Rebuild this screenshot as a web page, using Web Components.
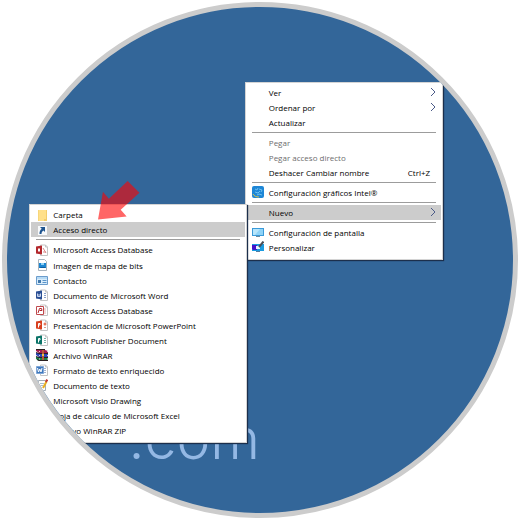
<!DOCTYPE html>
<html lang="es">
<head>
<meta charset="utf-8">
<title>Escritorio</title>
<style>
  body { margin: 0; background: #fff; font-family: "Open Sans", "Noto Sans", sans-serif; }
</style>
</head>
<body>
<desk-view>
  <span slot="wallpaper">.com</span>

  <context-menu slot="main" label="Escritorio">
    <menu-entry arrow>Ver</menu-entry>
    <menu-entry arrow>Ordenar por</menu-entry>
    <menu-entry>Actualizar</menu-entry>
    <menu-rule></menu-rule>
    <menu-entry disabled>Pegar</menu-entry>
    <menu-entry disabled>Pegar acceso directo</menu-entry>
    <menu-entry keys="Ctrl+Z">Deshacer Cambiar nombre</menu-entry>
    <menu-rule></menu-rule>
    <menu-entry icon="intel">Configuración gráficos Intel®</menu-entry>
    <menu-rule></menu-rule>
    <menu-entry active arrow>Nuevo</menu-entry>
    <menu-rule></menu-rule>
    <menu-entry icon="display">Configuración de pantalla</menu-entry>
    <menu-entry icon="personalize">Personalizar</menu-entry>
  </context-menu>

  <context-menu slot="sub" label="Nuevo">
    <menu-entry icon="folder">Carpeta</menu-entry>
    <menu-entry active icon="shortcut">Acceso directo</menu-entry>
    <menu-rule></menu-rule>
    <menu-entry icon="access">Microsoft Access Database</menu-entry>
    <menu-entry icon="bitmap">Imagen de mapa de bits</menu-entry>
    <menu-entry icon="contact">Contacto</menu-entry>
    <menu-entry icon="word">Documento de Microsoft Word</menu-entry>
    <menu-entry icon="access2">Microsoft Access Database</menu-entry>
    <menu-entry icon="powerpoint">Presentación de Microsoft PowerPoint</menu-entry>
    <menu-entry icon="publisher">Microsoft Publisher Document</menu-entry>
    <menu-entry icon="winrar">Archivo WinRAR</menu-entry>
    <menu-entry icon="rtf">Formato de texto enriquecido</menu-entry>
    <menu-entry icon="text">Documento de texto</menu-entry>
    <menu-entry>Microsoft Visio Drawing</menu-entry>
    <menu-entry>Hoja de cálculo de Microsoft Excel</menu-entry>
    <menu-entry icon="winrar">Archivo WinRAR ZIP</menu-entry>
  </context-menu>

  <pointer-arrow slot="pointer"></pointer-arrow>
</desk-view>

<script>
const page = (lines) => `<path d="M4.500 1h5l2 2v8.500h-7z" fill="#fff" stroke="#c4c4c4"/><path d="M9.500 1v2h2" fill="none" stroke="#c4c4c4"/>${lines}`;
const badge = (color, glyph) => `<path d="M0 2.500l6-1v9l-6-1z" fill="${color}"/>${glyph}`;

const ICONS = {
  folder: `<path d="M2 1h8v11H2z" fill="#ffe08a"/><path d="M10 1h1v11H8v-2h2z" fill="#f3cd6a"/><path d="M2 1h1v11H2z" fill="#f7d67a"/>`,
  shortcut: `<path d="M2 2h9v9H2z" fill="#f7f9fb"/><path d="M4 3h5v5L7.500 6.500C6 7.500 5.500 8.500 5.500 10H3.500C3.300 8 4.200 6 5.700 4.800z" fill="#1f5590"/>`,
  access: page(`<path d="M7 4l3 5M7 8h3" stroke="#d98a8a" fill="none"/>`) + badge("#b3282d", `<path d="M2 4.500h2v3H2z" fill="#fff"/>`),
  access2: page(`<path d="M8 5h2M8 7h2M8 9h2" stroke="#e2b0b0" fill="none"/>`) + `<path d="M.5 2.500h7v8h-7z" fill="#fff" stroke="#c04a4e"/><path d="M2 9l1.500-4.500H5.500L6 6.500H3.500" stroke="#b3282d" fill="none"/>`,
  bitmap: `<path d="M2.500 .5h6l2 2v9h-8z" fill="#fff" stroke="#a9b4bd"/><path d="M3 4h7v5H3z" fill="#1c86d1"/><path d="M3 9l2-1h4l1 1z" fill="#0c5da0"/><path d="M5 4h3v2H5z" fill="#8ed0f5"/>`,
  contact: `<path d="M.5 2.500h11v8H.5z" fill="#d9edfb" stroke="#6b9ccc"/><path d="M1 3h10v2H1z" fill="#b6daf5"/><path d="M2 6h3v3H2z" fill="#4379ad"/><path d="M6.500 6.500h4M6.500 8.500h4" stroke="#5a93c8" fill="none"/>`,
  word: page(`<path d="M8 4.500h2M8 6.500h2M8 8.500h2" stroke="#8aa0c8" fill="none"/>`) + badge("#2a4f94", `<path d="M1.500 4.500v3h3v-3M3 5v2" stroke="#c9d6ee" fill="none"/>`),
  powerpoint: page(`<circle cx="9" cy="5" r="1.500" fill="#e6775c"/><path d="M8 8.500h2" stroke="#dc9c8c"/>`) + badge("#d8401f", `<path d="M2.500 8.500V4.500h1.500v1.500H2.500" stroke="#fff" fill="none"/>`),
  publisher: page(`<path d="M8 4.500h2M8 6.500h2M8 8.500h2" stroke="#7bb5ac" fill="none"/>`) + badge("#0b7468", `<path d="M2.500 8.500V4.500h1.500v1.500H2.500" stroke="#fff" fill="none"/>`),
  winrar: `<path d="M0 1h9l3 1v2H3L0 2z" fill="#a01d4e"/><path d="M0 4h9l3 1v3H3L0 6z" fill="#2b45b8"/><path d="M0 8h9l3 1v3H3L0 10z" fill="#1b8048"/><path d="M0 .5h9M0 3.500l3 1h9M0 7.500l3 1h9M1 10.500l2 1h9" stroke="#2b2020" fill="none"/><path d="M3 2.500h9M3 6.500h9M3 10h9" stroke="#e0ccd4" fill="none" stroke-dasharray="1 3"/><path d="M6 1h2v10H6z" fill="#b9573a"/><path d="M6 5h2v2H6z" fill="#e8c34a"/>`,
  rtf: page(`<path d="M8 4.500h2M8 6.500h2M8 8.500h2" stroke="#a3b4d2" fill="none"/>`) + `<path d="M.5 2.500h7v7h-7z" fill="#3f79bd" stroke="#7ea5d6"/><path d="M1.500 4L2.500 8l1.300-3 1.200 3 1-4" stroke="#fff" fill="none"/>`,
  text: `<path d="M2.500 1.500h7v10h-7z" fill="#fff" stroke="#a4adb5"/><path d="M4 4.500h4M4 6.500h3M4 8.500h2" stroke="#a8bccc" fill="none"/><path d="M10.500 2.500L7 9" stroke="#e8ae22" stroke-width="2" fill="none"/><path d="M10 3l1.200-2.500" stroke="#c63b35" stroke-width="2" fill="none"/>`,
  intel: `<rect x="0" y="0" width="12" height="12" rx="2" fill="#1d86d6"/><path d="M1 8c1 2 3 3 6 3" stroke="#d7c04e" fill="none"/><path d="M3 3l2 1 1-2M7 3l3 1-1 2M3 6l3 1 2-2M5 9l2-1 3 1" stroke="#6fc0ee" fill="none"/>`,
  display: `<path d="M0 2h12v8H0z" fill="#3a9ad9"/><path d="M1 3h10v6H1z" fill="#8fd3f7"/><path d="M1 3h7L3 9H1z" fill="#b7e5fb"/><path d="M4 10h4v1H4z" fill="#6c8ba0"/>`,
  personalize: `<path d="M0 3h12v7H0z" fill="#1b9be0"/><path d="M0 4h5v5H1L0 8z" fill="#4313c8"/><path d="M4 5h4v3H4z" fill="#e6f4ff"/><path d="M11.500 .5L7 6" stroke="#4a4f58" stroke-width="2" fill="none"/><path d="M4 10h4v1H4z" fill="#557da0"/>`
};

class MenuEntry extends HTMLElement {
  connectedCallback() {
    const icon = ICONS[this.getAttribute("icon")] || "";
    const keys = this.getAttribute("keys") || "";
    const root = this.attachShadow({ mode: "open" });
    root.innerHTML = `
      <style>
        :host { display: block; }
        button {
          display: flex; align-items: center; width: 100%; height: 15px;
          margin: 0; padding: 0 5px; border: 0; background: none;
          font: inherit; font-size: 8px; line-height: 15px; color: #000;
          text-align: left; white-space: nowrap;
        }
        :host([active]) button { background: #ccc; }
        button:disabled { color: #6d6d6d; }
        .icon { flex: none; width: 12px; height: 12px; margin-right: 5px; }
        .label { flex: 1; }
        .keys { margin-right: 6px; }
        .arrow { flex: none; width: 6px; height: 10px; }
      </style>
      <button type="button" role="menuitem" ${this.hasAttribute("disabled") ? "disabled" : ""}>
        <svg class="icon" viewBox="0 0 12 12" aria-hidden="true">${icon}</svg>
        <span class="label"><slot></slot></span>
        ${keys ? `<span class="keys">${keys}</span>` : ""}
        ${this.hasAttribute("arrow") ? `<svg class="arrow" viewBox="0 0 6 10" aria-hidden="true"><path d="M1 1l4 4-4 4" fill="none" stroke="#4c5b88"/></svg>` : ""}
      </button>`;
  }
}

class MenuRule extends HTMLElement {
  connectedCallback() {
    this.setAttribute("role", "separator");
    this.attachShadow({ mode: "open" }).innerHTML = `
      <style>
        :host { display: block; padding: 2px 5px; }
        div { height: 1px; background: #9c9c9c; }
      </style><div></div>`;
  }
}

class ContextMenu extends HTMLElement {
  connectedCallback() {
    this.setAttribute("role", "menu");
    this.setAttribute("aria-label", this.getAttribute("label"));
    this.attachShadow({ mode: "open" }).innerHTML = `
      <style>
        :host {
          display: flex; flex-direction: column; justify-content: space-between;
          box-sizing: border-box; padding: 2px 1px 4px; background: #fff;
          border: 1px solid #d4d4d4; box-shadow: 1px 1px 1px #1c2f4c;
        }
      </style><slot></slot>`;
  }
}

class PointerArrow extends HTMLElement {
  connectedCallback() {
    this.attachShadow({ mode: "open" }).innerHTML = `
      <style>:host, svg { display: block; width: 100%; }</style>
      <svg viewBox="0 0 42 39" aria-hidden="true">
        <path d="M0 39L5 11l6 7L30 0l12 12-19 17 6 7z" fill="#f00" fill-opacity=".6"/>
      </svg>`;
  }
}

class DeskView extends HTMLElement {
  connectedCallback() {
    this.attachShadow({ mode: "open" }).innerHTML = `
      <style>
        :host { display: block; padding: 2px; }
        main {
          position: relative; box-sizing: border-box; width: 100%; aspect-ratio: 1;
          overflow: hidden; border: 5px solid #ccc; border-radius: 50%; background: #369;
        }
        slot { display: block; position: absolute; }
        slot[name=wallpaper] {
          left: 24%; bottom: 9%; font-family: Inter, sans-serif; font-weight: 300;
          font-size: 57px; line-height: 56px; color: #94b8e4;
        }
        slot[name=main] { display: grid; left: 47%; top: 14.800%; width: 39.200%; height: 35.200%; }
        slot[name=sub] { display: grid; left: 4.400%; top: 39%; width: 43%; height: 47.200%; }
        slot[name=pointer] { left: 18%; top: 34.400%; width: 8.200%; }
      </style>
      <main>
        <slot name="wallpaper"></slot>
        <slot name="main"></slot>
        <slot name="sub"></slot>
        <slot name="pointer"></slot>
      </main>`;
  }
}

customElements.define("menu-entry", MenuEntry);
customElements.define("menu-rule", MenuRule);
customElements.define("context-menu", ContextMenu);
customElements.define("pointer-arrow", PointerArrow);
customElements.define("desk-view", DeskView);
</script>
</body>
</html>
